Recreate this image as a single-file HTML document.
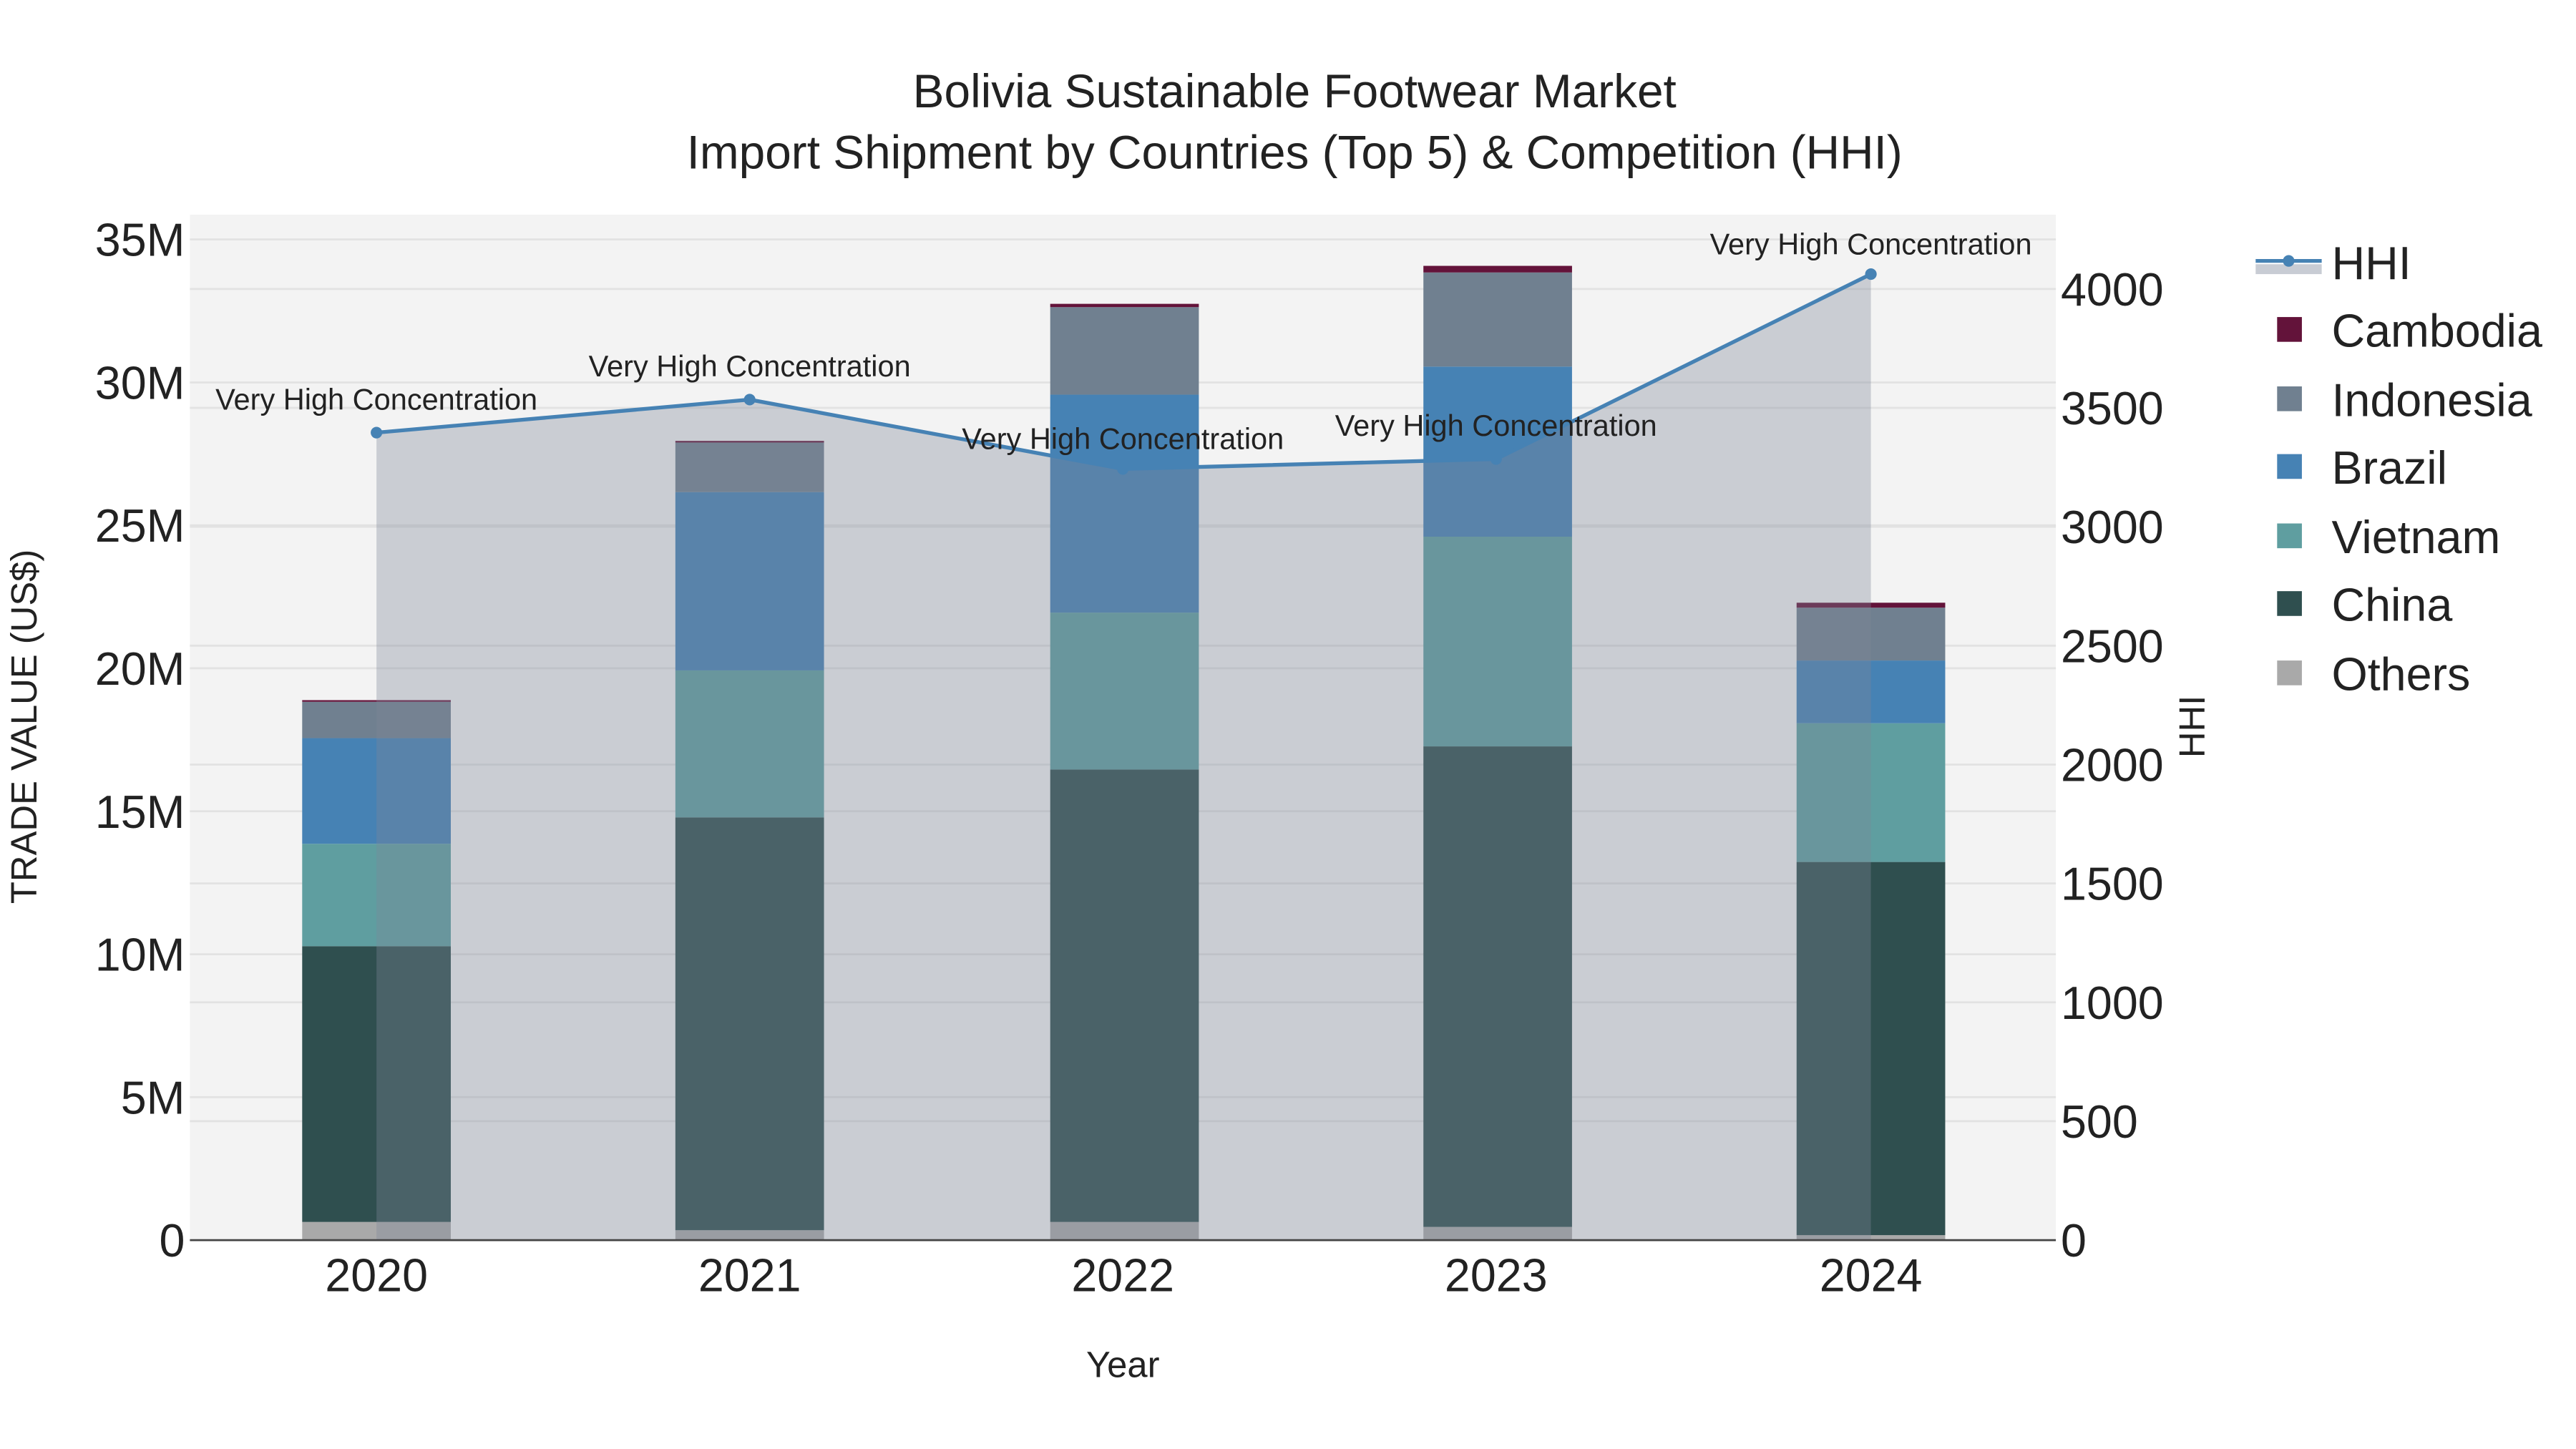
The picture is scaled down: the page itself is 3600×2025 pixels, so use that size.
<!DOCTYPE html>
<html><head><meta charset="utf-8"><style>html,body{margin:0;padding:0;background:#fff}svg{display:block}text{font-family:"Liberation Sans",Arial,sans-serif;fill:#222}</style></head><body>
<svg width="3600" height="2025" viewBox="0 0 1560 877.5" xmlns="http://www.w3.org/2000/svg">
<rect x="0" y="0" width="1560" height="877.5" fill="#fff"/>
<rect x="115" y="130" width="1130" height="621" fill="#f3f3f3"/>
<g stroke="#e2e2e2" stroke-width="1.2">
<line x1="115" x2="1245" y1="145" y2="145"/><line x1="115" x2="1245" y1="231.6" y2="231.6"/><line x1="115" x2="1245" y1="318.1" y2="318.1"/><line x1="115" x2="1245" y1="404.7" y2="404.7"/><line x1="115" x2="1245" y1="491.3" y2="491.3"/><line x1="115" x2="1245" y1="577.9" y2="577.9"/><line x1="115" x2="1245" y1="664.4" y2="664.4"/>
<line x1="115" x2="1245" y1="175" y2="175"/><line x1="115" x2="1245" y1="247" y2="247"/><line x1="115" x2="1245" y1="319" y2="319"/><line x1="115" x2="1245" y1="391" y2="391"/><line x1="115" x2="1245" y1="463" y2="463"/><line x1="115" x2="1245" y1="535" y2="535"/><line x1="115" x2="1245" y1="607" y2="607"/><line x1="115" x2="1245" y1="679" y2="679"/>
</g>
<g>
<rect x="183" y="740" width="90" height="11" fill="#a9a9a9"/><rect x="183" y="573" width="90" height="167" fill="#2f4f4f"/><rect x="183" y="511" width="90" height="62" fill="#5f9ea0"/><rect x="183" y="447" width="90" height="64" fill="#4682b4"/><rect x="183" y="425" width="90" height="22" fill="#708090"/><rect x="183" y="424" width="90" height="1" fill="#63133a"/>
<rect x="409" y="745" width="90" height="6" fill="#a9a9a9"/><rect x="409" y="495" width="90" height="250" fill="#2f4f4f"/><rect x="409" y="406" width="90" height="89" fill="#5f9ea0"/><rect x="409" y="298" width="90" height="108" fill="#4682b4"/><rect x="409" y="268" width="90" height="30" fill="#708090"/><rect x="409" y="267" width="90" height="1" fill="#63133a"/>
<rect x="636" y="740" width="90" height="11" fill="#a9a9a9"/><rect x="636" y="466" width="90" height="274" fill="#2f4f4f"/><rect x="636" y="371" width="90" height="95" fill="#5f9ea0"/><rect x="636" y="239" width="90" height="132" fill="#4682b4"/><rect x="636" y="186" width="90" height="53" fill="#708090"/><rect x="636" y="184" width="90" height="2" fill="#63133a"/>
<rect x="862" y="743" width="90" height="8" fill="#a9a9a9"/><rect x="862" y="452" width="90" height="291" fill="#2f4f4f"/><rect x="862" y="325" width="90" height="127" fill="#5f9ea0"/><rect x="862" y="222" width="90" height="103" fill="#4682b4"/><rect x="862" y="165" width="90" height="57" fill="#708090"/><rect x="862" y="161" width="90" height="4" fill="#63133a"/>
<rect x="1088" y="748" width="90" height="3" fill="#a9a9a9"/><rect x="1088" y="522" width="90" height="226" fill="#2f4f4f"/><rect x="1088" y="438" width="90" height="84" fill="#5f9ea0"/><rect x="1088" y="400" width="90" height="38" fill="#4682b4"/><rect x="1088" y="368" width="90" height="32" fill="#708090"/><rect x="1088" y="365" width="90" height="3" fill="#63133a"/>
</g>
<polygon points="228,751 228,262 454,242 680,284 906,278 1133,166 1133,751" fill="rgb(125,135,152)" fill-opacity="0.35"/>
<line x1="115" x2="1245" y1="751" y2="751" stroke="#444" stroke-width="1.2"/>
<polyline points="228,262 454,242 680,284 906,278 1133,166" fill="none" stroke="#4682b4" stroke-width="2.3"/>
<g fill="#4682b4"><circle cx="228" cy="262" r="3.5"/><circle cx="454" cy="242" r="3.5"/><circle cx="680" cy="284" r="3.5"/><circle cx="906" cy="278" r="3.5"/><circle cx="1133" cy="166" r="3.5"/></g>
<g font-size="18" text-anchor="middle" fill="#111">
<text x="228" y="248">Very High Concentration</text>
<text x="454" y="228">Very High Concentration</text>
<text x="680" y="272">Very High Concentration</text>
<text x="906" y="264">Very High Concentration</text>
<text x="1133" y="154">Very High Concentration</text>
</g>
<g font-size="28.5" text-anchor="middle">
<text x="784" y="65">Bolivia Sustainable Footwear Market</text>
<text x="784" y="102">Import Shipment by Countries (Top 5) &amp; Competition (HHI)</text>
</g>
<g font-size="28" text-anchor="end">
<text x="112" y="155">35M</text><text x="112" y="241.6">30M</text><text x="112" y="328.1">25M</text><text x="112" y="414.7">20M</text><text x="112" y="501.3">15M</text><text x="112" y="587.9">10M</text><text x="112" y="674.4">5M</text><text x="112" y="761">0</text>
</g>
<g font-size="28">
<text x="1248" y="185">4000</text><text x="1248" y="257">3500</text><text x="1248" y="329">3000</text><text x="1248" y="401">2500</text><text x="1248" y="473">2000</text><text x="1248" y="545">1500</text><text x="1248" y="617">1000</text><text x="1248" y="689">500</text><text x="1248" y="761">0</text>
</g>
<g font-size="28" text-anchor="middle">
<text x="228" y="782">2020</text><text x="454" y="782">2021</text><text x="680" y="782">2022</text><text x="906" y="782">2023</text><text x="1133" y="782">2024</text>
</g>
<text x="680" y="834" font-size="22" text-anchor="middle">Year</text>
<text transform="translate(22,440) rotate(-90)" font-size="22" text-anchor="middle">TRADE VALUE (US$)</text>
<text transform="translate(1335,440) rotate(-90)" font-size="22" text-anchor="middle">HHI</text>
<rect x="1366" y="160" width="40" height="6" fill="#c8ccd4"/>
<line x1="1366" x2="1406" y1="158" y2="158" stroke="#4682b4" stroke-width="2.3"/>
<circle cx="1386" cy="158" r="3.5" fill="#4682b4"/>
<g>
<rect x="1379" y="192" width="15" height="15" fill="#63133a"/>
<rect x="1379" y="234" width="15" height="15" fill="#708090"/>
<rect x="1379" y="275" width="15" height="15" fill="#4682b4"/>
<rect x="1379" y="317" width="15" height="15" fill="#5f9ea0"/>
<rect x="1379" y="358" width="15" height="15" fill="#2f4f4f"/>
<rect x="1379" y="400" width="15" height="15" fill="#a9a9a9"/>
</g>
<g font-size="28">
<text x="1412" y="169">HHI</text>
<text x="1412" y="210">Cambodia</text>
<text x="1412" y="252">Indonesia</text>
<text x="1412" y="293">Brazil</text>
<text x="1412" y="335">Vietnam</text>
<text x="1412" y="376">China</text>
<text x="1412" y="418">Others</text>
</g>
</svg>
</body></html>
